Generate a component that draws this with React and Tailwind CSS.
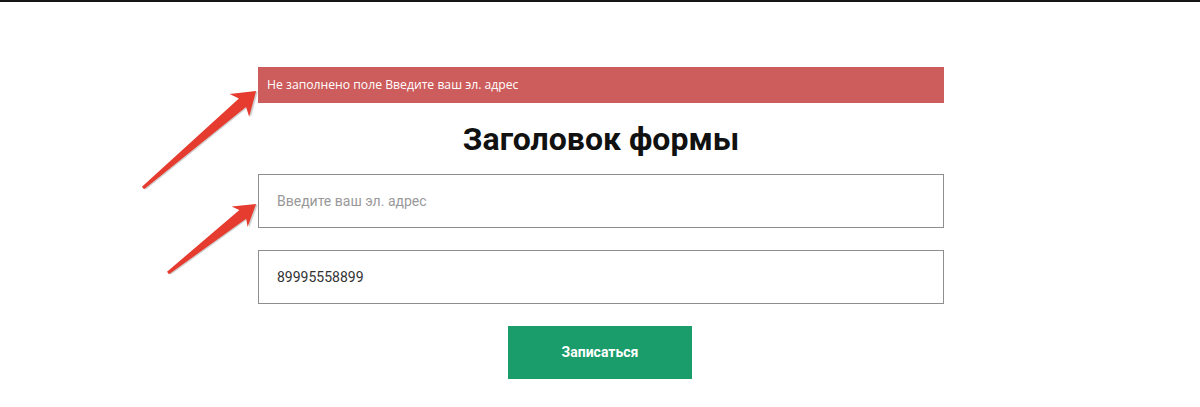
import React from "react";

// Red annotation arrow, drawn along +x then rotated into place
function Arrow({ x, y, angle, length, head = 22, barb = 13 }) {
  const L = length;
  const pts = `0,-1.6 ${L - head + 4},-5.5 ${L - head},-${barb} ${L},0 ${L - head},${barb} ${L - head + 4},5.5 0,1.6`;
  return (
    <g transform={`translate(${x} ${y}) rotate(${angle})`}>
      <polygon points={pts} fill="#000" opacity="0.18" transform="translate(1 1.5)" />
      <polygon points={pts} fill="#e63c2f" />
    </g>
  );
}

export default function App() {
  return (
    <div className="relative w-full h-[407px] bg-white overflow-hidden">
      <div className="h-[2px] bg-[#151515]" />

      <div className="w-[686px] ml-[258px] mt-[65px] flex flex-col">
        {/* error */}
        <div className="h-[36px] bg-[#cd5c5c] flex items-center pl-[9px] text-white text-[12.2px] font-['Open_Sans',sans-serif]">
          Не заполнено поле Введите ваш эл. адрес
        </div>

        {/* title */}
        <h1 className="h-[71px] flex items-center justify-center text-[32px] font-bold text-[#111] font-['Roboto',sans-serif]">
          Заголовок формы
        </h1>

        <input
          className="h-[54px] border border-[#8e8e8e] px-[18px] text-[14px] text-[#333] placeholder:text-[#999] font-['Roboto',sans-serif] outline-none"
          placeholder="Введите ваш эл. адрес"
        />
        <input
          className="h-[54px] mt-[22px] border border-[#8e8e8e] px-[18px] text-[14px] text-[#333] font-['Roboto',sans-serif] outline-none"
          defaultValue="89995558899"
        />

        <button className="self-start ml-[250px] w-[184px] h-[53px] mt-[22px] bg-[#1b9c6b] text-white text-[14px] font-bold font-['Roboto',sans-serif]">
          Записаться
        </button>
      </div>

      {/* annotation arrows */}
      <svg className="absolute inset-0 pointer-events-none" width="1200" height="407">
        <Arrow x={143} y={188} angle={-40.6} length={149} head={22} barb={15} />
        <Arrow x={168} y={273} angle={-38.1} length={112} head={21} barb={13} />
      </svg>
    </div>
  );
}
